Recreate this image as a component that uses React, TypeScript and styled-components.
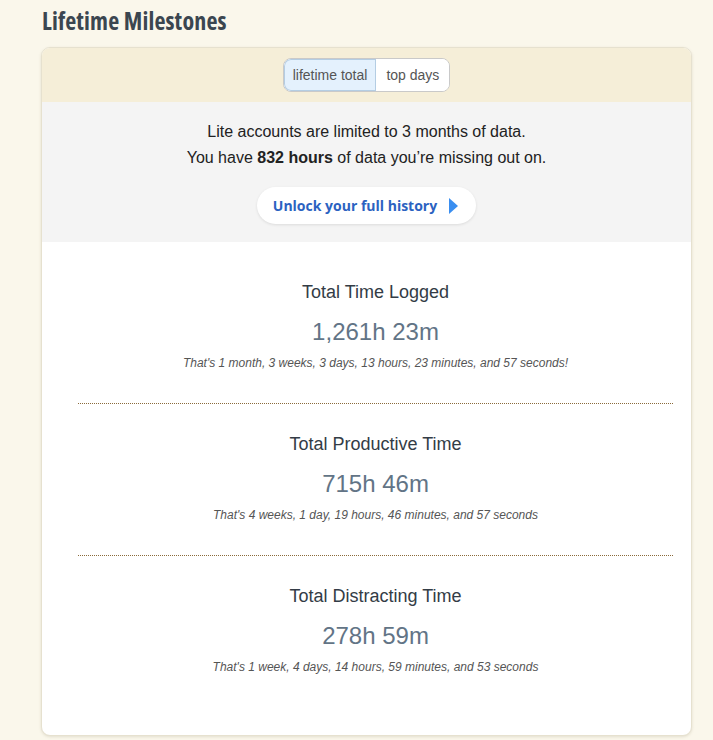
import React from "react";
import styled, { createGlobalStyle } from "styled-components";

const Global = createGlobalStyle`
  html, body { margin: 0; padding: 0; background: #faf7eb; }
  body { font-family: "Liberation Sans", Arial, sans-serif; }
`;

const Page = styled.div`
  padding: 6px 21px 6px 41px;
`;

const Title = styled.h2`
  margin: 0 0 11px 1px;
  font-family: "Open Sans", sans-serif;
  font-weight: 700;
  font-stretch: 87.5%;
  font-size: 24px;
  line-height: 30px;
  letter-spacing: 0.15px;
  color: #3b4650;
`;

const Card = styled.div`
  width: 651px;
  box-sizing: border-box;
  border: 1px solid #e6e1cf;
  border-radius: 9px;
  overflow: hidden;
  background: #fff;
  box-shadow: 0 1px 3px rgba(120, 110, 80, 0.18);
`;

const HeaderBand = styled.div`
  background: #f5eed8;
  height: 54px;
  display: flex;
  justify-content: center;
  align-items: center;
`;

const Toggle = styled.div`
  display: flex;
  border: 1px solid #c9c9c9;
  border-radius: 8px;
  overflow: hidden;
  background: #fff;
`;

const ToggleButton = styled.div<{ $active?: boolean }>`
  height: 32px;
  padding: 0 ${(p) => (p.$active ? "9px" : "10px")};
  display: flex;
  align-items: center;
  font-size: 14px;
  color: #555;
  background: ${(p) => (p.$active ? "#e4f1fd" : "#fff")};
  box-shadow: ${(p) => (p.$active ? "inset 0 0 0 1px #b4cde3" : "none")};
  border-radius: ${(p) => (p.$active ? "7px 0 0 7px" : "0")};
`;

const Upsell = styled.div`
  background: #f4f4f4;
  padding: 17px 0 18px;
  display: flex;
  flex-direction: column;
  align-items: center;
  color: #222;
  font-size: 16px;
  line-height: 26px;
`;

const UnlockButton = styled.div`
  margin-top: 16px;
  height: 37px;
  padding: 0 18px 0 16px;
  background: #fff;
  border-radius: 19px;
  display: flex;
  align-items: center;
  gap: 12px;
  box-shadow: 0 1px 3px rgba(0, 0, 0, 0.1);
  font-family: "Open Sans", sans-serif;
  font-weight: 700;
  font-size: 14px;
  color: #2b62c1;
`;

const Stats = styled.div`
  padding: 38px 18px 60px 36px;
`;

const Stat = styled.div`
  display: flex;
  flex-direction: column;
  align-items: center;
  padding: 0 0 32px;
  & + & {
    border-top: 1px dotted #8a6a3a;
    padding-top: 28px;
  }
  &:last-child {
    padding-bottom: 0;
  }
`;

const StatTitle = styled.div`
  font-size: 18px;
  line-height: 24px;
  color: #333c46;
`;

const StatValue = styled.div`
  margin-top: 13px;
  font-size: 24px;
  line-height: 30px;
  color: #627486;
`;

const StatNote = styled.div`
  margin-top: 8px;
  font-size: 12px;
  line-height: 16px;
  font-style: italic;
  color: #555;
`;

const stats = [
  {
    title: "Total Time Logged",
    value: "1,261h 23m",
    note: "That's 1 month, 3 weeks, 3 days, 13 hours, 23 minutes, and 57 seconds!",
  },
  {
    title: "Total Productive Time",
    value: "715h 46m",
    note: "That's 4 weeks, 1 day, 19 hours, 46 minutes, and 57 seconds",
  },
  {
    title: "Total Distracting Time",
    value: "278h 59m",
    note: "That's 1 week, 4 days, 14 hours, 59 minutes, and 53 seconds",
  },
];

export default function App() {
  return (
    <>
      <Global />
      <Page>
        <Title>Lifetime Milestones</Title>
        <Card>
          <HeaderBand>
            <Toggle>
              <ToggleButton $active>lifetime total</ToggleButton>
              <ToggleButton>top days</ToggleButton>
            </Toggle>
          </HeaderBand>
          <Upsell>
            <div>Lite accounts are limited to 3 months of data.</div>
            <div>
              You have <b>832 hours</b> of data you’re missing out on.
            </div>
            <UnlockButton>
              Unlock your full history
              <svg width="9" height="16" viewBox="0 0 9 16">
                <path d="M0 0 L9 8 L0 16 Z" fill="#3a8ef0" />
              </svg>
            </UnlockButton>
          </Upsell>
          <Stats>
            {stats.map((s) => (
              <Stat key={s.title}>
                <StatTitle>{s.title}</StatTitle>
                <StatValue>{s.value}</StatValue>
                <StatNote>{s.note}</StatNote>
              </Stat>
            ))}
          </Stats>
        </Card>
      </Page>
    </>
  );
}
